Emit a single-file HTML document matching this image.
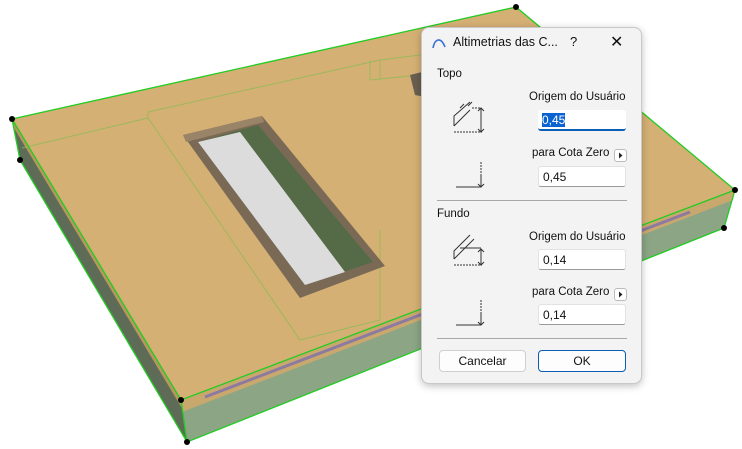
<!DOCTYPE html>
<html><head><meta charset="utf-8"><style>
body{margin:0;width:742px;height:449px;background:#fff;overflow:hidden;position:relative;font-family:"Segoe UI","Liberation Sans",sans-serif;}
svg.bg{position:absolute;left:0;top:0}
.dlg{position:absolute;left:421px;top:27px;width:219px;height:355px;background:#f3f3f3;border:1px solid #c8c8c8;border-radius:8px;box-shadow:0 2px 8px rgba(0,0,0,.25);font-size:11.5px;color:#111}
.t{position:absolute;white-space:nowrap}
.in{position:absolute;left:116px;width:88px;height:21px;background:#fff;border:1px solid #e2e2e2;border-bottom:1px solid #9a9a9a;border-radius:3px;box-sizing:border-box;padding:3px 0 0 4px;font-size:12px}
.btn{position:absolute;top:322px;height:22px;background:#fdfdfd;border:1px solid #cfcfcf;border-radius:4px;box-sizing:border-box;text-align:center;line-height:20px;font-size:12px}
.sep{position:absolute;left:15px;width:190px;height:1px;background:#a8a8a8}
.arr{position:absolute;left:192px;width:11px;height:11px;border:1px solid #bbb;border-radius:3px;background:#fff}
</style></head><body>
<svg class="bg" width="742" height="449">
<polygon points="12,119 181,400 187,442 20,160" fill="#5d6b57"/>
<polygon points="12,119 181,400 183,410 14,128" fill="#b8975e"/>
<polygon points="181,400 735,190 724,228 187,442" fill="#8ba585"/>
<polygon points="181,400 735,190 733,200 182,412" fill="#c9a86e"/>
<polygon points="12,119 516,7 735,190 181,400" fill="#d4b074"/>
<g stroke="#8dbb55" stroke-width="1" fill="none" opacity=".8">
<polyline points="22,148 148,118 300,340 380,320 380,280"/>
<polyline points="148,112 148,118"/>
<polyline points="148,112 380,60 540,40"/>
<polyline points="370,60 370,80 420,75"/>
<line x1="380" y1="60" x2="380" y2="80"/>
<line x1="380" y1="230" x2="380" y2="300"/>
</g>
<line x1="205" y1="397" x2="690" y2="212" stroke="#8c7aa0" stroke-width="3"/>
<g stroke="#22cc22" stroke-width="1.3" fill="none">
<polygon points="12,119 516,7 735,190 181,400"/>
<polyline points="12,119 20,160 187,442 724,228 735,190"/>
<line x1="181" y1="400" x2="187" y2="442"/>
</g>
<polygon points="183,135 262,116 385,266 300,298" fill="#7a6a55"/>
<polygon points="183,135 262,116 264,122 186,142" fill="#9a8468"/>
<polygon points="198,142 258,125 373,262 305,285" fill="#556b48"/>
<polygon points="198,142 240,132 345,272 305,285" fill="#dcdcdc"/>
<polygon points="410,75 430,70 440,100 415,95" fill="#6a5f50"/>
<g fill="#000"><circle cx="12" cy="119" r="3"/><circle cx="20" cy="160" r="3"/><circle cx="181" cy="400" r="3"/><circle cx="187" cy="442" r="3"/><circle cx="516" cy="7" r="3"/><circle cx="735" cy="190" r="3"/><circle cx="724" cy="228" r="3"/></g>
</svg>
<div class="dlg">
<svg style="position:absolute;left:9px;top:8px" width="16" height="14"><path d="M2 12 C4 2,10 1,14 11" stroke="#3a6fd8" stroke-width="1.6" fill="none"/></svg>
<div class="t" style="left:31px;top:7px;font-size:12.5px">Altimetrias das C...</div>
<div class="t" style="left:148px;top:6px;font-size:13px">?</div>
<div class="t" style="left:188px;top:4px;font-size:16px">✕</div>
<div class="t" style="left:15px;top:40px">Topo</div>
<svg style="position:absolute;left:30px;top:70px" width="34" height="35"><path d="M2 28 V18 L18 4 M2 28 L18 12 M8 10 L12 6 M16 8 L20 4" stroke="#333" fill="none"/><path d="M2 34 H30" stroke="#333" stroke-dasharray="2 1"/><path d="M29 10 V34 M26 13 L29 10 L32 13 M26 31 L29 34 L32 31" stroke="#333" fill="none"/><path d="M20 10 H29" stroke="#333" stroke-dasharray="2 1"/></svg>
<svg style="position:absolute;left:30px;top:132px" width="34" height="30"><path d="M29 2 V26" stroke="#333" stroke-dasharray="2 1"/><path d="M29 14 V27 M26 24 L29 27 L32 24 M4 27 H29" stroke="#333" fill="none"/></svg>
<div class="t" style="left:107px;top:63px">Origem do Usuário</div>
<div class="in" style="top:82px;border:none;border-bottom:2px solid #0a5fb4;background:#fff"><span style="background:#0a63d0;color:#fff">0,45</span></div>
<div class="t" style="left:110px;top:119px">para Cota Zero</div>
<div class="arr" style="top:121px"><svg width="11" height="11"><path d="M4 2.5 L7.5 5.5 L4 8.5Z" fill="#222"/></svg></div>
<div class="in" style="top:138px">0,45</div>
<div class="sep" style="top:172px"></div>
<div class="t" style="left:15px;top:180px">Fundo</div>
<svg style="position:absolute;left:30px;top:205px" width="34" height="35"><path d="M2 26 V18 L18 2 M2 26 L22 6 M8 15 H29" stroke="#333" fill="none"/><path d="M2 32 H30 M8 15 H29" stroke="#333" stroke-dasharray="2 1"/><path d="M29 16 V32 M26 19 L29 16 L32 19 M26 29 L29 32 L32 29" stroke="#333" fill="none"/></svg>
<svg style="position:absolute;left:30px;top:270px" width="34" height="30"><path d="M29 2 V26" stroke="#333" stroke-dasharray="2 1"/><path d="M29 14 V27 M26 24 L29 27 L32 24 M4 27 H29" stroke="#333" fill="none"/></svg>
<div class="t" style="left:107px;top:203px">Origem do Usuário</div>
<div class="in" style="top:221px">0,14</div>
<div class="t" style="left:110px;top:258px">para Cota Zero</div>
<div class="arr" style="top:260px"><svg width="11" height="11"><path d="M4 2.5 L7.5 5.5 L4 8.5Z" fill="#222"/></svg></div>
<div class="in" style="top:276px">0,14</div>
<div class="sep" style="top:310px"></div>
<div class="btn" style="left:17px;width:87px">Cancelar</div>
<div class="btn" style="left:116px;width:88px;border-color:#0a5fb4">OK</div>
</div>
</body></html>
